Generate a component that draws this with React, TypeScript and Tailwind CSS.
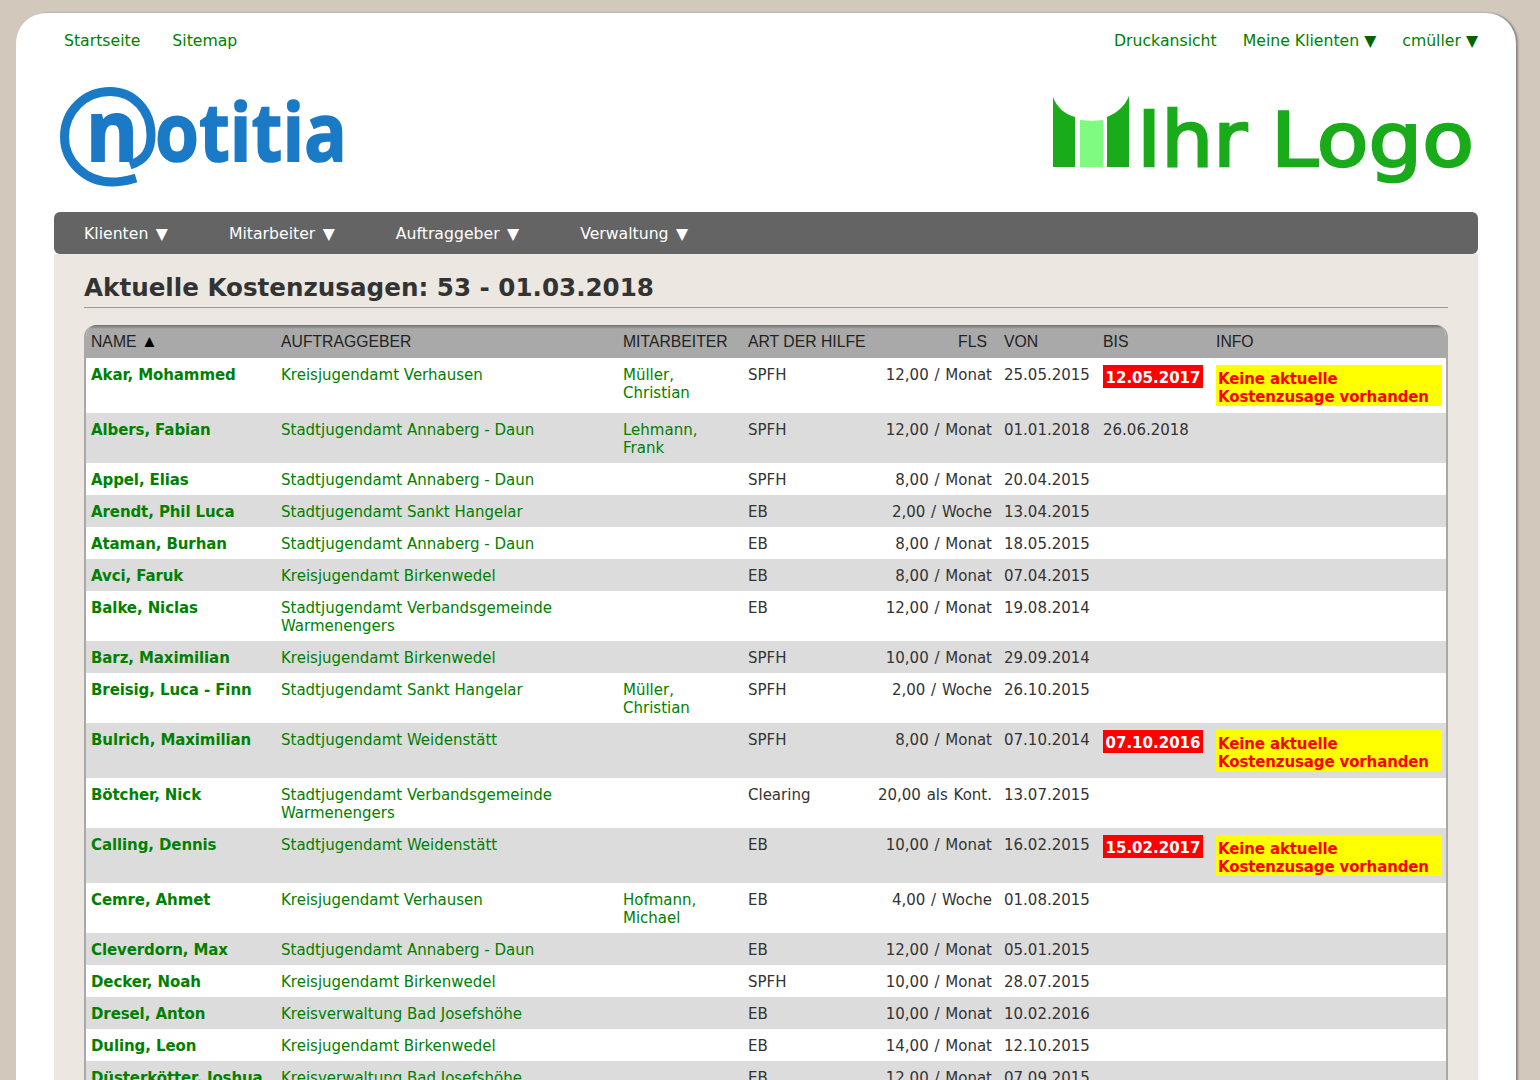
const rows: [string, string, string, string, string, string, string, boolean][] = [
  ["Akar, Mohammed", "Kreisjugendamt Verhausen", "Müller, Christian", "SPFH", "12,00 / Monat", "25.05.2015", "12.05.2017", true],
  ["Albers, Fabian", "Stadtjugendamt Annaberg - Daun", "Lehmann, Frank", "SPFH", "12,00 / Monat", "01.01.2018", "26.06.2018", false],
  ["Appel, Elias", "Stadtjugendamt Annaberg - Daun", "", "SPFH", "8,00 / Monat", "20.04.2015", "", false],
  ["Arendt, Phil Luca", "Stadtjugendamt Sankt Hangelar", "", "EB", "2,00 / Woche", "13.04.2015", "", false],
  ["Ataman, Burhan", "Stadtjugendamt Annaberg - Daun", "", "EB", "8,00 / Monat", "18.05.2015", "", false],
  ["Avci, Faruk", "Kreisjugendamt Birkenwedel", "", "EB", "8,00 / Monat", "07.04.2015", "", false],
  ["Balke, Niclas", "Stadtjugendamt Verbandsgemeinde Warmenengers", "", "EB", "12,00 / Monat", "19.08.2014", "", false],
  ["Barz, Maximilian", "Kreisjugendamt Birkenwedel", "", "SPFH", "10,00 / Monat", "29.09.2014", "", false],
  ["Breisig, Luca - Finn", "Stadtjugendamt Sankt Hangelar", "Müller, Christian", "SPFH", "2,00 / Woche", "26.10.2015", "", false],
  ["Bulrich, Maximilian", "Stadtjugendamt Weidenstätt", "", "SPFH", "8,00 / Monat", "07.10.2014", "07.10.2016", true],
  ["Bötcher, Nick", "Stadtjugendamt Verbandsgemeinde Warmenengers", "", "Clearing", "20,00 als Kont.", "13.07.2015", "", false],
  ["Calling, Dennis", "Stadtjugendamt Weidenstätt", "", "EB", "10,00 / Monat", "16.02.2015", "15.02.2017", true],
  ["Cemre, Ahmet", "Kreisjugendamt Verhausen", "Hofmann, Michael", "EB", "4,00 / Woche", "01.08.2015", "", false],
  ["Cleverdorn, Max", "Stadtjugendamt Annaberg - Daun", "", "EB", "12,00 / Monat", "05.01.2015", "", false],
  ["Decker, Noah", "Kreisjugendamt Birkenwedel", "", "SPFH", "10,00 / Monat", "28.07.2015", "", false],
  ["Dresel, Anton", "Kreisverwaltung Bad Josefshöhe", "", "EB", "10,00 / Monat", "10.02.2016", "", false],
  ["Duling, Leon", "Kreisjugendamt Birkenwedel", "", "EB", "14,00 / Monat", "12.10.2015", "", false],
  ["Düsterkötter, Joshua", "Kreisverwaltung Bad Josefshöhe", "", "EB", "12,00 / Monat", "07.09.2015", "", false],
];

const headBg = "h-[33px] p-0 align-middle font-normal whitespace-nowrap bg-[linear-gradient(#6f6f6f,#a9a9a9_4px)]";
const headCell = headBg + " pl-[7px] text-left";
const cell = "pt-[8px] pr-[7px] pb-[6px] pl-[7px] align-top";

function NotitiaLogo() {
  return (
    <svg width="290" height="124" viewBox="0 -20 290 124" className="block">
      <path d="M77 91 C70 93 64 95 53 95 C26 95 5.500 74 5.500 50 C5.500 24 26 4.500 51 4.500 C75 4.500 92 24 92 48 C92 64 86 73 71 78" fill="none" stroke="#1a7ac6" strokeWidth="9" />
      <text x="27" y="73.500" textLength="52" lengthAdjust="spacingAndGlyphs" fontFamily="'Open Sans', sans-serif" fontWeight="700" fontSize="84" fill="#1a7ac6" stroke="#1a7ac6" strokeWidth="2">n</text>
      <text x="96" y="73.500" textLength="192" lengthAdjust="spacingAndGlyphs" fontFamily="'Open Sans', sans-serif" fontWeight="700" fontSize="80" fill="#1a7ac6" stroke="#1a7ac6" strokeWidth="1.500">otitia</text>
    </svg>
  );
}

function IhrLogo() {
  return (
    <svg width="422" height="96" viewBox="0 -4 422 96" className="block">
      <path d="M0 1 C4 12 12 18 22 21 L22 71 L0 71 Z" fill="#1aab1a" />
      <path d="M27 24 C35 25 43 25 50 24 L50 71 L27 71 Z" fill="#7ffb7f" />
      <path d="M76 0 C72 10 64 17 54 21 L54 71 L76 71 Z" fill="#1aab1a" />
      <text x="84" y="70" textLength="110" lengthAdjust="spacingAndGlyphs" fontFamily="'DejaVu Sans', sans-serif" fontSize="76" fill="#1aab1a" stroke="#1aab1a" strokeWidth="2.500">Ihr</text>
      <text x="218" y="70" textLength="203" lengthAdjust="spacingAndGlyphs" fontFamily="'DejaVu Sans', sans-serif" fontSize="74" fill="#1aab1a" stroke="#1aab1a" strokeWidth="2.500">Logo</text>
    </svg>
  );
}

export default function App() {
  return (
    <div className="h-[1080px] overflow-hidden bg-[#d2c8bc] pt-[13px] pl-[16px] font-['DejaVu_Sans',sans-serif] text-[15px] leading-[18px] text-[#333]">
      <div className="h-[1200px] w-[1500px] rounded-t-[30px] bg-white px-[38px] shadow-[2px_0_2px_#888]">
        <div className="flex h-[54px] items-center justify-between pt-[2px] text-[15.7px] text-[#008000]">
          <div className="flex gap-[32px] pl-[10px]">
            <span>Startseite</span>
            <span>Sitemap</span>
          </div>
          <div className="flex gap-[26px]">
            <span>Druckansicht</span>
            <span>Meine Klienten <span className="text-[#006400]">▼</span></span>
            <span>cmüller <span className="text-[#006400]">▼</span></span>
          </div>
        </div>
        <div className="flex h-[145px] items-start justify-between pt-[20px]">
          <div className="ml-[5px] -mt-[20px]"><NotitiaLogo /></div>
          <div className="mr-[3px] mt-[5px]"><IhrLogo /></div>
        </div>
        <div className="flex h-[42px] items-center gap-[61px] rounded-[6px] bg-[#646464] pt-[2px] pl-[30px] text-[15.7px] text-white">
          <span>Klienten <span className="ml-[2.5px]">▼</span></span>
          <span>Mitarbeiter <span className="ml-[2.5px]">▼</span></span>
          <span>Auftraggeber <span className="ml-[2.5px]">▼</span></span>
          <span>Verwaltung <span className="ml-[2.5px]">▼</span></span>
        </div>
        <div className="bg-[#ece7e1] px-[30px] pb-8">
          <h1 className="h-[54px] border-b border-[#999] pt-[18px] text-[24.6px] leading-[32px] font-bold text-[#333]">Aktuelle Kostenzusagen: 53 - 01.03.2018</h1>
          <div className="mt-[17px] overflow-hidden rounded-t-[12px] border-x-2 border-[#a9a9a9]">
            <table className="w-[1360px] table-fixed border-collapse">
              <colgroup>
                <col className="w-[188px]" />
                <col className="w-[342px]" />
                <col className="w-[125px]" />
                <col className="w-[125px]" />
                <col className="w-[131px]" />
                <col className="w-[99px]" />
                <col className="w-[113px]" />
                <col className="w-[237px]" />
              </colgroup>
              <thead>
                <tr className="font-['Liberation_Sans','DejaVu_Sans',sans-serif] text-[15.75px] text-[#222]">
                  <th className={headBg + " pl-[5px] text-left"}>NAME <span className="text-[17px] leading-[18px] text-black">▲</span></th>
                  <th className={headCell}>AUFTRAGGEBER</th>
                  <th className={headCell}>MITARBEITER</th>
                  <th className={headCell}>ART DER HILFE</th>
                  <th className={headBg + " pr-[10px] text-right"}>FLS</th>
                  <th className={headCell}>VON</th>
                  <th className={headCell}>BIS</th>
                  <th className={headCell}>INFO</th>
                </tr>
              </thead>
              <tbody>
                {rows.map((r, i) => (
                  <tr key={r[0]} className={i % 2 === 0 ? "bg-white" : "bg-[#dcdcdc]"}>
                    <td className="pt-[8px] pr-[7px] pb-[6px] pl-[5px] align-top font-bold tracking-[-0.1px] text-[#008000]">{r[0]}</td>
                    <td className={cell + " text-[#008000]"}>{r[1]}</td>
                    <td className={cell + " text-[#008000]"}>{r[2]}</td>
                    <td className={cell}>{r[3]}</td>
                    <td className="pt-[8px] pr-[5px] pb-[6px] text-right align-top whitespace-nowrap [word-spacing:1px]">{r[4]}</td>
                    <td className={cell}>{r[5]}</td>
                    {r[7] ? (
                      <td className="py-[7px] pl-[7px] align-top">
                        <span className="block h-[23px] w-[100px] bg-[#ff0000] pt-[4px] text-center font-bold text-white">{r[6]}</span>
                      </td>
                    ) : (
                      <td className={cell}>{r[6]}</td>
                    )}
                    <td className="py-[7px] pr-[4px] pl-[7px] align-top">
                      {r[7] && (
                        <div className="h-[41px] bg-[#ffff00] pt-[5px] pl-[2px] font-bold tracking-[-0.13px] text-[#ff0000]">
                          Keine aktuelle<br />Kostenzusage vorhanden
                        </div>
                      )}
                    </td>
                  </tr>
                ))}
              </tbody>
            </table>
          </div>
        </div>
      </div>
    </div>
  );
}
